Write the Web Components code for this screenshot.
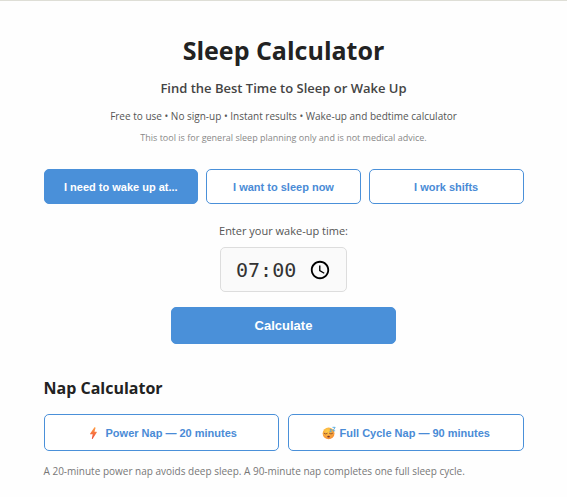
<!DOCTYPE html>
<html lang="en-GB">
<head>
<meta charset="utf-8">
<meta name="viewport" content="width=device-width, initial-scale=1">
<title>Sleep Calculator</title>
<style>
  body {
    margin: 0;
    background: #fefefe;
    color: #222;
    border-top: 1px solid #deded6;
    font-family: "Open Sans", sans-serif;
  }
</style>
</head>
<body>
<sleep-calculator></sleep-calculator>

<script>
class ToolHeader extends HTMLElement {
  constructor() {
    super();
    this.template = `
      <style>
        :host {
          display: block;
          text-align: center;
        }

        h1, h2, p { margin: 0; }

        h1 {
          font-size: 25px;
          line-height: 36px;
          font-weight: 700;
        }

        h2 {
          margin-top: 8px;
          font-size: 13px;
          line-height: 24px;
          font-weight: 600;
          color: #444;
        }

        .features {
          margin-top: 8px;
          font-size: 10px;
          line-height: 16px;
          color: #555;
        }

        .note {
          margin-top: 6px;
          font-size: 9px;
          line-height: 16px;
          color: #888;
        }
      </style>
      <h1><slot name="title"></slot></h1>
      <h2><slot name="subtitle"></slot></h2>
      <p class="features"><slot name="features"></slot></p>
      <p class="note"><slot name="note"></slot></p>
    `;
  }

  connectedCallback() {
    this.attachShadow({mode: 'open'}).innerHTML = this.template;
  }
}

class ToolButton extends HTMLElement {
  constructor() {
    super();
    this.template = `
      <style>
        :host {
          display: block;
          min-width: 0;
        }

        button {
          display: flex;
          align-items: center;
          justify-content: center;
          gap: 4px;
          box-sizing: border-box;
          width: 100%;
          min-height: 35px;
          padding: 4px 8px;
          border: 1px solid #4a90d9;
          border-radius: 5px;
          background: #fff;
          color: #4a8bd6;
          font: 700 11px/16px "Liberation Sans", Arial, sans-serif;
          cursor: pointer;
        }

        :host([active]) button,
        :host([primary]) button {
          background: #4a90d9;
          color: #fff;
        }

        :host([large]) button,
        :host([primary]) button {
          min-height: 37px;
        }

        :host([primary]) button {
          font-size: 13px;
        }
      </style>
      <button type="button"><slot name="icon"></slot><span><slot></slot></span></button>
    `;
  }

  connectedCallback() {
    this.attachShadow({mode: 'open'}).innerHTML = this.template;
  }
}

class TimeField extends HTMLElement {
  constructor() {
    super();
    this.template = `
      <style>
        :host {
          display: flex;
          flex-direction: column;
          align-items: center;
          gap: 8px;
        }

        label {
          font-size: 11px;
          line-height: 16px;
          color: #555;
        }

        input {
          box-sizing: border-box;
          width: 127px;
          height: 45px;
          padding: 0 12px 0 15px;
          border: 1px solid #ddd;
          border-radius: 5px;
          background: #fafafa;
          color: #333;
          font: 20px "DejaVu Sans Mono", monospace;
        }

        input::-webkit-datetime-edit,
        input::-webkit-datetime-edit-fields-wrapper,
        input::-webkit-datetime-edit-hour-field,
        input::-webkit-datetime-edit-minute-field {
          padding: 0;
        }

        /* always show the 24 hour form */
        input::-webkit-datetime-edit-ampm-field {
          display: none;
        }

        input::-webkit-calendar-picker-indicator {
          width: 22px;
          height: 22px;
          margin-inline-start: 8px;
        }
      </style>
      <label for="time"><slot></slot></label>
      <input id="time" type="time" value="${this.getAttribute('value')}">
    `;
  }

  connectedCallback() {
    this.attachShadow({mode: 'open'}).innerHTML = this.template;
  }
}

class BoltIcon extends HTMLElement {
  connectedCallback() {
    this.attachShadow({mode: 'open'}).innerHTML = `
      <style>
        :host { display: block; }
        svg { display: block; }
      </style>
      <svg width="16" height="14" viewBox="-4 0 36 32" aria-hidden="true">
        <defs>
          <linearGradient id="bolt" x1="0" y1="0" x2="0" y2="1">
            <stop offset="0" stop-color="#ffa044"/>
            <stop offset="1" stop-color="#ee4b3c"/>
          </linearGradient>
        </defs>
        <path fill="url(#bolt)" d="M15 3 5 17.500q-.6 1.500 1 1.500h5L9 29q1 1 2 0L20.500 14.500q.6-1.500-1-1.500H15L17.500 4.500Q17.500 2 15 3z"/>
      </svg>
    `;
  }
}

class SleepyIcon extends HTMLElement {
  connectedCallback() {
    this.attachShadow({mode: 'open'}).innerHTML = `
      <style>
        :host { display: block; }
        svg { display: block; }
      </style>
      <svg width="14" height="14" viewBox="0 0 32 32" aria-hidden="true">
        <defs>
          <radialGradient id="face" cx=".4" cy=".3" r=".75">
            <stop offset="0" stop-color="#ffd04a"/>
            <stop offset="1" stop-color="#f58a35"/>
          </radialGradient>
        </defs>
        <circle cx="15" cy="17" r="13.500" fill="url(#face)"/>
        <g fill="none" stroke="#8a4a2c" stroke-width="2" stroke-linecap="round">
          <path d="M5 17q3.500 3 7 0"/>
          <path d="M17 17q3.500 3 7 0"/>
        </g>
        <ellipse cx="15" cy="24" rx="3" ry="2" fill="#7c3530"/>
        <g fill="none" stroke="#4ba3dc" stroke-width="2" stroke-linejoin="round">
          <path d="M24 3h6l-5 8h5"/>
          <path d="M18 8h4l-4 5h4"/>
        </g>
      </svg>
    `;
  }
}

class NapSection extends HTMLElement {
  constructor() {
    super();
    this.template = `
      <style>
        :host { display: block; }

        h2, p { margin: 0; }

        h2 {
          font-size: 16px;
          line-height: 24px;
          font-weight: 700;
        }

        .options {
          display: grid;
          grid-template-columns: 1fr 1fr;
          gap: 9px;
          margin-top: 14px;
        }

        p {
          margin-top: 12px;
          font-size: 10px;
          line-height: 16px;
          color: #777;
        }
      </style>
      <h2><slot name="title"></slot></h2>
      <div class="options"><slot></slot></div>
      <p><slot name="note"></slot></p>
    `;
  }

  connectedCallback() {
    this.attachShadow({mode: 'open'}).innerHTML = this.template;
  }
}

class SleepCalculator extends HTMLElement {
  constructor() {
    super();
    this.template = `
      <style>
        :host {
          display: block;
          max-width: 480px;
          margin: 0 auto;
          padding: 31px 24px 16px;
        }

        .modes {
          display: grid;
          grid-template-columns: repeat(3, 1fr);
          gap: 8px;
          margin-top: 23px;
        }

        time-field { margin-top: 19px; }

        .calculate {
          width: 47%;
          margin: 15px auto 0;
        }

        nap-section { margin-top: 32px; }
      </style>
      <tool-header>
        <span slot="title">Sleep Calculator</span>
        <span slot="subtitle">Find the Best Time to Sleep or Wake Up</span>
        <span slot="features">Free to use • No sign-up • Instant results • Wake-up and bedtime calculator</span>
        <span slot="note">This tool is for general sleep planning only and is not medical advice.</span>
      </tool-header>
      <div class="modes">
        <tool-button active>I need to wake up at...</tool-button>
        <tool-button>I want to sleep now</tool-button>
        <tool-button>I work shifts</tool-button>
      </div>
      <time-field value="07:00">Enter your wake-up time:</time-field>
      <tool-button class="calculate" primary>Calculate</tool-button>
      <nap-section>
        <span slot="title">Nap Calculator</span>
        <tool-button large><bolt-icon slot="icon"></bolt-icon>Power Nap — 20 minutes</tool-button>
        <tool-button large><sleepy-icon slot="icon"></sleepy-icon>Full Cycle Nap — 90 minutes</tool-button>
        <span slot="note">A 20-minute power nap avoids deep sleep. A 90-minute nap completes one full sleep cycle.</span>
      </nap-section>
    `;
  }

  connectedCallback() {
    this.attachShadow({mode: 'open'}).innerHTML = this.template;
  }
}

customElements.define('tool-header', ToolHeader);
customElements.define('tool-button', ToolButton);
customElements.define('time-field', TimeField);
customElements.define('bolt-icon', BoltIcon);
customElements.define('sleepy-icon', SleepyIcon);
customElements.define('nap-section', NapSection);
customElements.define('sleep-calculator', SleepCalculator);
</script>
</body>
</html>
